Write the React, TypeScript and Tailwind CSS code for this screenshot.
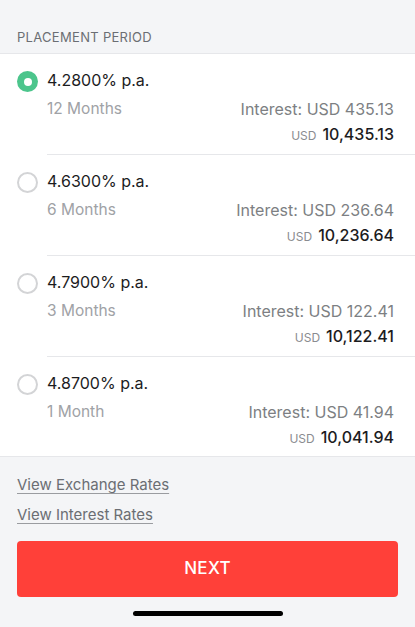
import React from "react";

const rows = [
  { rate: "4.2800% p.a.", period: "12 Months", interest: "Interest: USD 435.13", total: "10,435.13", selected: true },
  { rate: "4.6300% p.a.", period: "6 Months", interest: "Interest: USD 236.64", total: "10,236.64", selected: false },
  { rate: "4.7900% p.a.", period: "3 Months", interest: "Interest: USD 122.41", total: "10,122.41", selected: false },
  { rate: "4.8700% p.a.", period: "1 Month", interest: "Interest: USD 41.94", total: "10,041.94", selected: false },
];

export default function App() {
  return (
    <div
      className="w-[415px] h-[627px] bg-[#f4f5f7] flex flex-col overflow-hidden"
      style={{ fontFamily: "Inter, 'Noto Sans', sans-serif" }}
    >
      <div className="h-[53px] flex items-end pl-[17px] pb-[8px]">
        <span className="text-[13px] tracking-[0.3px] text-[#6b6e73] leading-[16px]">PLACEMENT PERIOD</span>
      </div>
      <div className="bg-white border-t border-b border-[#e6e7ea]">
        {rows.map((r, i) => (
          <div key={i} className="flex pl-[17px]">
            <div className="pt-[17px]">
              {r.selected ? (
                <div className="w-[21px] h-[21px] rounded-full bg-[#4cc58c] flex items-center justify-center">
                  <div className="w-[8px] h-[8px] rounded-full bg-white" />
                </div>
              ) : (
                <div className="w-[21px] h-[21px] rounded-full border-2 border-[#d3d4d6]" />
              )}
            </div>
            <div
              className={
                "flex-1 ml-[9px] pr-[21px] pt-[14px] " +
                (i < rows.length - 1 ? "pb-[8px] border-b border-[#e6e7ea]" : "pb-[7px]")
              }
            >
              <div className="h-[24px] leading-[24px] text-[16px] text-[#1c1c1e]">{r.rate}</div>
              <div className="mt-[5px] h-[24px] flex justify-between items-center">
                <span className="text-[15.5px] text-[#a0a2a6]">{r.period}</span>
                <span className="text-[16px] text-[#7d7f83]">{r.interest}</span>
              </div>
              <div className="mt-[1px] h-[24px] flex justify-end items-center">
                <span className="text-[12px] text-[#8a8c90] mr-[6px] mt-[3px]">USD</span>
                <span className="text-[16px] font-medium text-[#1c1c1e]">{r.total}</span>
              </div>
            </div>
          </div>
        ))}
      </div>
      <div className="pl-[17px] pt-[17px] flex flex-col gap-[8px]">
        <span className="text-[15px] leading-[22px] text-[#6b6e73] underline underline-offset-[3px] decoration-[#9a9ca0]">View Exchange Rates</span>
        <span className="text-[15px] leading-[22px] text-[#6b6e73] underline underline-offset-[3px] decoration-[#9a9ca0]">View Interest Rates</span>
      </div>
      <div className="px-[17px] mt-[15px]">
        <div className="h-[56px] rounded-[4px] bg-[#ff4039] flex items-center justify-center">
          <span className="text-white text-[17px] font-medium tracking-[0.3px]">NEXT</span>
        </div>
      </div>
      <div className="flex justify-center mt-[14px]">
        <div className="w-[150px] h-[5px] rounded-full bg-black" />
      </div>
    </div>
  );
}
